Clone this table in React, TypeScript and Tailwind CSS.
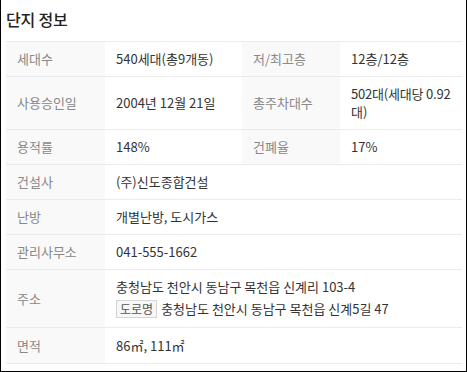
import React from "react";

const font = { fontFamily: '"Noto Sans CJK KR", "Noto Sans", sans-serif' };

function Label({ children }: { children: React.ReactNode }) {
  return (
    <div className="bg-[#f9f9f9] px-[11px] py-2 text-[13px] leading-[18px] text-[#888888] border-b border-[#ebebeb] flex items-center">
      {children}
    </div>
  );
}

function Value({ children, wide, tight }: { children: React.ReactNode; wide?: boolean; tight?: boolean }) {
  return (
    <div
      className={
        "py-2 text-[13px] leading-[18px] text-[#333333] border-b border-[#ebebeb] flex flex-col justify-center " +
        (tight ? "pl-[11px] pr-[0px] " : "px-[11px] ") +
        (wide ? "col-span-3" : "")
      }
    >
      {children}
    </div>
  );
}

export default function App() {
  return (
    <div
      className="w-[467px] h-[372px] border-l border-r border-b border-black bg-white pl-[5px] pr-[4px]"
      style={font}
    >
      <div className="h-[41px] flex items-center pb-[3px]">
        <h2 className="text-[16px] font-medium text-[#222222] tracking-[-0.2px]">단지 정보</h2>
      </div>
      <div className="grid grid-cols-[99px_137px_98px_122px] border-t border-[#ebebeb]">
        <Label>세대수</Label>
        <Value>540세대(총9개동)</Value>
        <Label>저/최고층</Label>
        <Value>12층/12층</Value>

        <Label>사용승인일</Label>
        <Value>2004년 12월 21일</Value>
        <Label>총주차대수</Label>
        <Value tight>
          <div className="whitespace-nowrap tracking-[-0.2px]">502대(세대당 0.92</div>
          <div>대)</div>
        </Value>

        <Label>용적률</Label>
        <Value>148%</Value>
        <Label>건폐율</Label>
        <Value>17%</Value>

        <Label>건설사</Label>
        <Value wide>(주)신도종합건설</Value>

        <Label>난방</Label>
        <Value wide>개별난방, 도시가스</Value>

        <Label>관리사무소</Label>
        <Value wide>041-555-1662</Value>

        <Label>주소</Label>
        <Value wide>
          <div>충청남도 천안시 동남구 목천읍 신계리 103-4</div>
          <div className="mt-[3px] h-[20px] flex items-center">
            <span className="border border-[#d5d5d5] bg-[#f7f7f7] text-[12px] leading-[14px] px-[3px] py-[1px] text-[#555555] mr-[4px]">
              도로명
            </span>
            <span>충청남도 천안시 동남구 목천읍 신계5길 47</span>
          </div>
        </Value>

        <Label>면적</Label>
        <Value wide>
          <div className="leading-[19px]">86㎡, 111㎡</div>
        </Value>
      </div>
    </div>
  );
}
